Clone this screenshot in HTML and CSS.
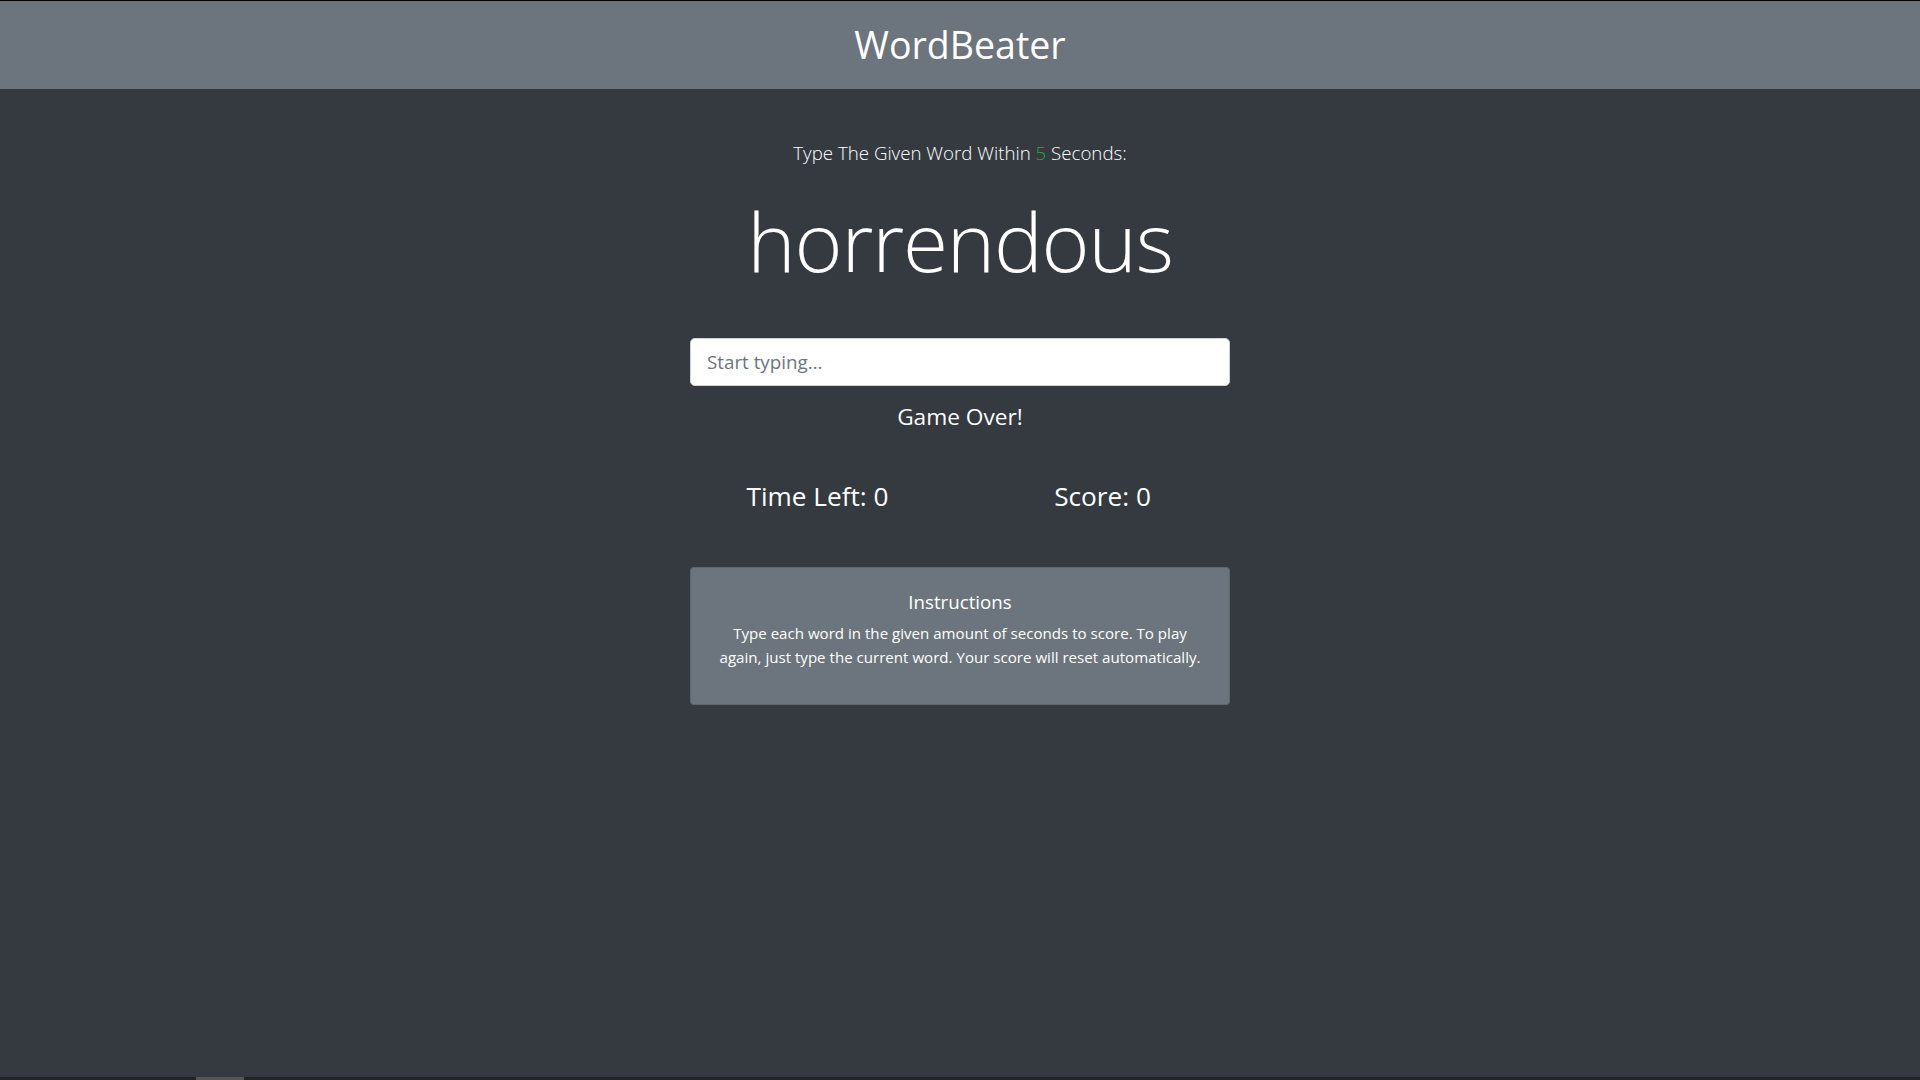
FILE: index.html
```html
<!DOCTYPE html>
<html lang="en">
<head>
<meta charset="utf-8">
<title>WordBeater</title>
<link rel="stylesheet" href="styles.css">
</head>
<body>
<header class="header">
  <h1 class="brand">WordBeater</h1>
</header>
<main class="main">
  <div class="column">
    <p class="lead">Type The Given Word Within <span class="seconds">5</span> Seconds:</p>
    <h2 class="current-word">horrendous</h2>
    <input class="word-input" type="text" placeholder="Start typing...">
    <h4 class="message">Game Over!</h4>
    <div class="stats">
      <h3 class="stat">Time Left: <span>0</span></h3>
      <h3 class="stat">Score: <span>0</span></h3>
    </div>
    <div class="card">
      <h5 class="card-title">Instructions</h5>
      <p class="card-text">Type each word in the given amount of seconds to score. To play again, just type the current word. Your score will reset automatically.</p>
    </div>
  </div>
</main>
<div class="hscroll"><div class="hscroll-thumb"></div></div>
</body>
</html>
```
FILE: styles.css
```css
* { box-sizing: border-box; }
html, body { height: 100%; }
body {
  margin: 0;
  background: #343a40;
  color: #fff;
  font-family: "Open Sans", "Noto Sans", sans-serif;
  font-size: 15px;
  line-height: 1.5;
  overflow: hidden;
}
.header {
  border-top: 1px solid #000;
  height: 89px;
  padding-bottom: 2px;
  background: #6c757d;
  display: flex;
  align-items: center;
  justify-content: center;
}
.brand {
  margin: 0;
  font-weight: 400;
  font-size: 37.5px;
  line-height: 45px;
}
.main {
  display: flex;
  justify-content: center;
  padding-top: 49px;
}
.column {
  width: 540px;
  display: flex;
  flex-direction: column;
  align-items: stretch;
  text-align: center;
}
.lead {
  margin: 0;
  font-size: 18.7px;
  font-weight: 300;
  line-height: 30px;
}
.seconds { color: #28a745; }
.current-word {
  margin: 20px 0 0;
  font-size: 82px;
  font-weight: 300;
  letter-spacing: -1.2px;
  line-height: 105.6px;
}
.word-input {
  margin-top: 44px;
  height: 48px;
  width: 100%;
  padding: 8px 16px;
  font-family: inherit;
  font-size: 18.8px;
  color: #495057;
  background: #fff;
  border: 1px solid #ced4da;
  border-radius: 4.8px;
  outline: none;
}
.word-input::placeholder { color: #6c757d; }
.message {
  margin: 17px 0 0;
  font-size: 22.7px;
  font-weight: 400;
  line-height: 28.8px;
}
.stats {
  margin: 49px -15px 0;
  display: flex;
}
.stat {
  flex: 1;
  margin: 0;
  font-size: 26.2px;
  font-weight: 400;
  line-height: 33.6px;
}
.card {
  margin-top: 53px;
  background: #6c757d;
  border: 1px solid rgba(0,0,0,.125);
  border-radius: 4px;
  padding: 22px 20px 19px;
}
.card-title {
  margin: 0 0 7px;
  font-size: 18.7px;
  font-weight: 400;
  line-height: 24px;
}
.card-text {
  margin: 0 0 16px;
  font-size: 15.1px;
  line-height: 24px;
}
.hscroll {
  position: fixed;
  left: 0;
  right: 0;
  bottom: 0;
  height: 3px;
  background: #222426;
}
.hscroll-thumb {
  margin-left: 196px;
  width: 48px;
  height: 100%;
  background: #555;
}
```
